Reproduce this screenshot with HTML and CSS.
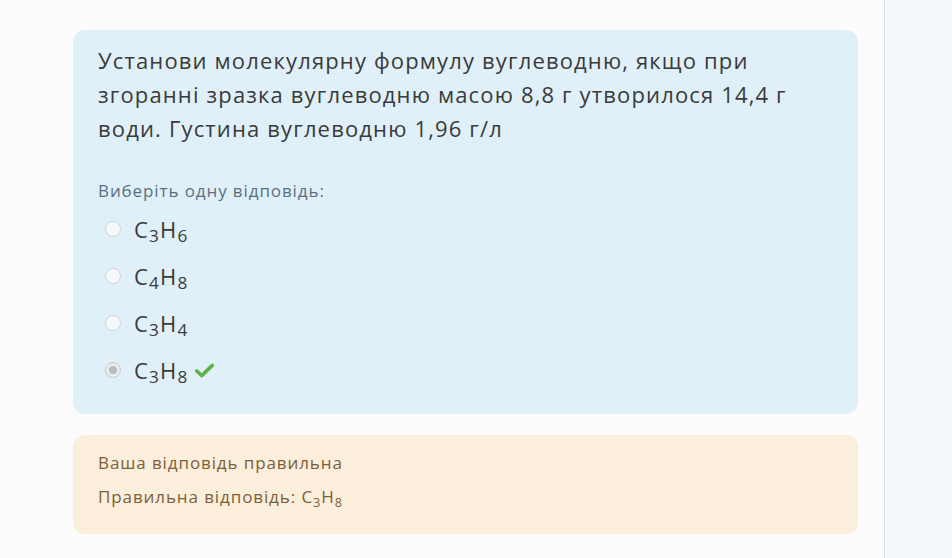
FILE: index.html
```html
<!DOCTYPE html>
<html lang="uk">
<head>
<meta charset="utf-8">
<link rel="stylesheet" href="styles.css">
</head>
<body>
<div class="page">
  <main class="main">
    <section class="question">
      <p class="qtext">Установи молекулярну формулу вуглеводню, якщо при згоранні зразка вуглеводню масою 8,8 г утворилося 14,4 г води. Густина вуглеводню 1,96 г/л</p>
      <div class="prompt">Виберіть одну відповідь:</div>
      <div class="answers">
        <label class="answer"><span class="radio"></span><span class="formula">C<sub>3</sub>H<sub>6</sub></span></label>
        <label class="answer"><span class="radio"></span><span class="formula">C<sub>4</sub>H<sub>8</sub></span></label>
        <label class="answer"><span class="radio"></span><span class="formula">C<sub>3</sub>H<sub>4</sub></span></label>
        <label class="answer"><span class="radio checked"></span><span class="formula">C<sub>3</sub>H<sub>8</sub></span>
          <svg class="tick" width="19" height="15" viewBox="0 0 19 15"><path d="M1.8 8 L6.8 12.6 L17.2 2.4" fill="none" stroke="#5fb14c" stroke-width="3.6" stroke-linecap="round" stroke-linejoin="round"/></svg>
        </label>
      </div>
    </section>
    <section class="feedback">
      <div class="fb-line">Ваша відповідь правильна</div>
      <div class="fb-line">Правильна відповідь: C<sub>3</sub>H<sub>8</sub></div>
    </section>
  </main>
  <aside class="sidebar"></aside>
</div>
</body>
</html>
```
FILE: styles.css
```css
* { box-sizing: border-box; }
html, body { margin: 0; padding: 0; }
body {
  font-family: "Open Sans", "Noto Sans", sans-serif;
  background: #fcfcfc;
  color: #333;
}
.page {
  display: flex;
  height: 558px;
  overflow: hidden;
}
.main {
  width: 884px;
  flex: none;
  padding: 30px 26px 0 73px;
  display: flex;
  flex-direction: column;
  gap: 21px;
}
.sidebar {
  flex: 1;
  background: #f5f8fd;
  border-left: 1px solid #dde3ea;
}
.question {
  background: #e0f0f8;
  border-radius: 12px;
  padding: 13px 25px 20px 25px;
  height: 384px;
}
.qtext {
  margin: 0;
  font-size: 22px;
  line-height: 34px;
  color: #3a3a3a;
  letter-spacing: 1.15px;
}
.prompt {
  margin-top: 34px;
  font-size: 17px;
  color: #5b6f80;
  line-height: 24px;
  letter-spacing: 0.9px;
}
.answers {
  display: flex;
  flex-direction: column;
  margin-top: 2px;
}
.answer {
  display: flex;
  align-items: center;
  height: 47px;
  padding-left: 7px;
  font-size: 22px;
  color: #3a3a3a;
  letter-spacing: 1.2px;
}
.radio {
  width: 16px;
  height: 16px;
  border-radius: 50%;
  border: 1px solid #cfd6da;
  background: #f7f8f9;
  margin-right: 13px;
  flex: none;
  position: relative;
}
.radio.checked {
  background: #e9ebec;
  border-color: #c6cbcf;
}
.radio.checked::after {
  content: "";
  position: absolute;
  left: 3px;
  top: 3px;
  width: 8px;
  height: 8px;
  border-radius: 50%;
  background: #b9bdc0;
}
.formula sub {
  font-size: 0.78em;
  vertical-align: -0.22em;
  line-height: 0;
}
.tick {
  margin-left: 6px;
  margin-top: 2px;
}
.feedback {
  background: #fbeedb;
  border-radius: 12px;
  height: 99px;
  padding: 16px 25px;
  color: #7d5f3a;
  font-size: 17px;
  letter-spacing: 0.9px;
  display: flex;
  flex-direction: column;
  gap: 10px;
}
.fb-line { line-height: 24px; }
.feedback sub {
  font-size: 0.75em;
  vertical-align: -0.3em;
  line-height: 0;
}
```
